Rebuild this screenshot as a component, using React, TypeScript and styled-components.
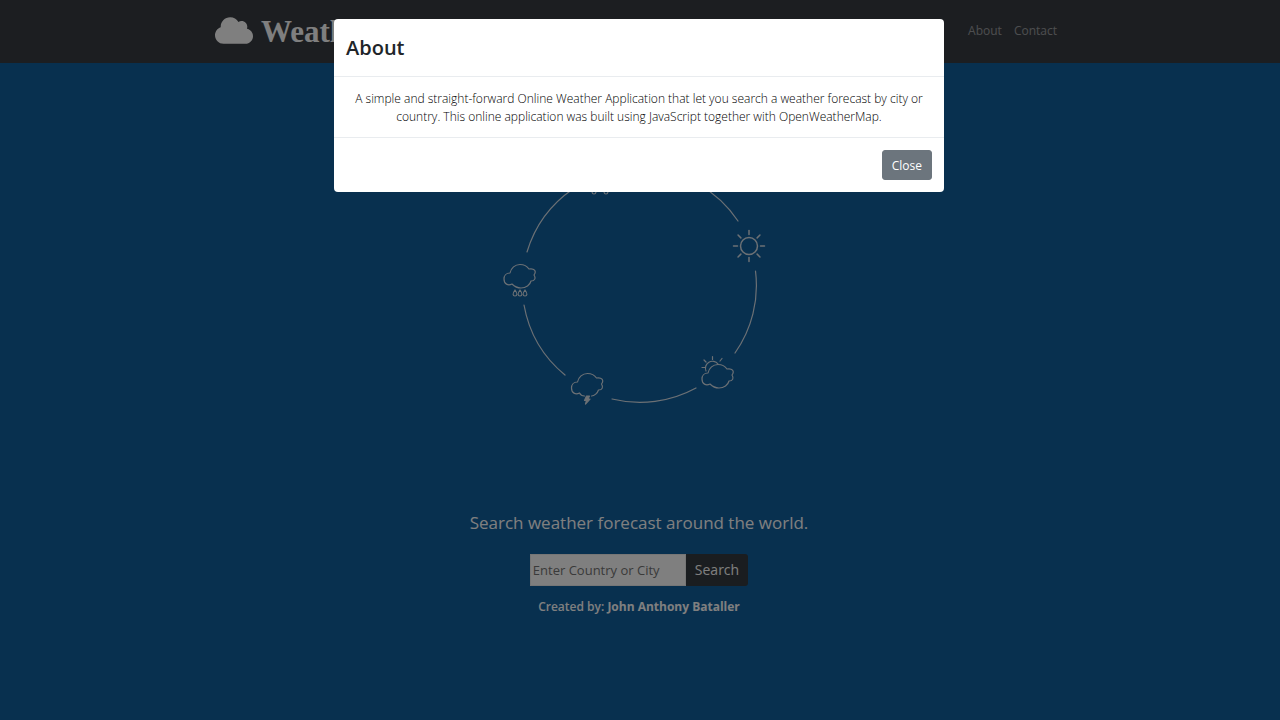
import React, { useState } from 'react';
import styled, { createGlobalStyle } from 'styled-components';
import { FaCloud } from 'react-icons/fa';

const GlobalStyle = createGlobalStyle`
  *, *::before, *::after { box-sizing: border-box; }
  html { background: #10609f; }
  body {
    margin: 0;
    padding-right: 2px;
    color: #212529;
    font-family: "Segoe UI", "Open Sans", "Noto Sans", sans-serif;
    font-size: 12px;
    line-height: 18px;
  }
`;

const Header = styled.header`
  margin-right: -2px;
  background: #383c42;
`;

const NavBar = styled.nav`
  display: flex;
  align-items: center;
  justify-content: space-between;
  max-width: 850px;
  min-height: 63px;
  margin: 0 auto;
`;

const Brand = styled.a`
  display: flex;
  align-items: center;
  gap: 8px;
  color: #fff;
  font: bold 31px/38px "Liberation Serif", "Times New Roman", serif;
  text-decoration: none;
`;

const CloudMark = styled(FaCloud)`
  width: 38px;
  height: 31px;
  margin-bottom: 2px;
`;

const NavLinks = styled.div`
  display: flex;
  padding: 0 2px 2px 0;
`;

const NavLink = styled.a`
  padding: 6px;
  color: rgba(255, 255, 255, 0.5);
  text-decoration: none;
`;

const Main = styled.main`
  display: flex;
  flex-direction: column;
  align-items: center;
  padding: 67px 12px 24px;
  color: #fff;
`;

const Cycle = styled.svg`
  width: 280px;
  height: 280px;
  margin-bottom: 98px;
  fill: none;
  stroke: #d8e1e9;
  stroke-width: 1.2;
  stroke-linecap: round;
  stroke-linejoin: round;
`;

const Tagline = styled.h1`
  margin: 0 0 16px;
  font-size: 17px;
  font-weight: 400;
  line-height: 30px;
`;

const SearchForm = styled.form`
  display: flex;
  margin-bottom: 12px;
`;

const SearchBox = styled.input`
  width: 156px;
  height: 32px;
  padding: 0 2px;
  border: 1px solid #ececec;
  border-radius: 0;
  background: #fff;
  font: inherit;
  font-size: 13px;
  &::placeholder { color: #757575; opacity: 1; }
`;

const SearchButton = styled.button`
  height: 32px;
  padding: 0 9px;
  border: 0;
  border-radius: 0 3px 3px 0;
  background: #343a40;
  color: #fff;
  font: inherit;
  font-size: 14px;
`;

const Credit = styled.p`
  margin: 0;
  font-weight: 600;
  strong { font-weight: 700; }
`;

const Backdrop = styled.div`
  position: fixed;
  inset: 0;
  display: flex;
  align-items: flex-start;
  justify-content: center;
  padding: 19px 14px 19px 12px;
  background: rgba(0, 0, 0, 0.5);
`;

const Dialog = styled.section`
  width: 100%;
  max-width: 610px;
  border-radius: 4px;
  background: #fff;
`;

const DialogHeader = styled.header`
  padding: 12px;
  border-bottom: 1px solid #e9ecef;
`;

const DialogTitle = styled.h2`
  margin: 0;
  font-size: 20px;
  font-weight: 600;
  line-height: 33px;
`;

const DialogBody = styled.p`
  margin: 0;
  padding: 13px 12px 11px;
  color: #000;
  font-weight: 300;
  text-align: center;
`;

const DialogFooter = styled.footer`
  display: flex;
  justify-content: flex-end;
  padding: 12px;
  border-top: 1px solid #e9ecef;
`;

const CloseButton = styled.button`
  height: 30px;
  padding: 1px 9px 0;
  border: 1px solid #6c757d;
  border-radius: 3px;
  background: #6c757d;
  color: #fff;
  font: inherit;
`;

const CLOUD =
  'M-10-3C-14-3-16 0-16 3C-16 8-12 10-8 8C-5 11-2 12 1 12C6 12 10 9 11 5C15 5 16 2 14-1C17-5 14-8 9-7C7-10 4-11.5 0-11.5C-5-11.5-9-8-10-3Z';
const DROP = 'M0-3C-3 1-2 3 0 3C2 3 3 1 0-3Z';

function Rain({ x, y, drops }: { x: number; y: number; drops: number[] }) {
  return (
    <g transform={`translate(${x} ${y})`}>
      <path d={CLOUD} />
      {drops.map((dx) => (
        <path key={dx} d={DROP} transform={`translate(${dx} 17)`} />
      ))}
    </g>
  );
}

function WeatherCycle() {
  return (
    <Cycle viewBox="499 130 280 280" aria-hidden="true">
      <path d="M527 252A117 117 0 0 1 573 189M698 184A117 117 0 0 1 738 221M755.500 271A117 117 0 0 1 735 353M696 388A117 117 0 0 1 612 399M565 375A117 117 0 0 1 524 305M626 170A117 117 0 0 1 650 169" />
      <Rain x={600} y={174} drops={[-6, 6]} />
      <Rain x={520} y={276} drops={[-5, 0, 5]} />
      <g transform="translate(749 246)" strokeWidth="1.5">
        <circle r="8.500" />
        {[0, 45, 90, 135, 180, 225, 270, 315].map((a) => (
          <path key={a} d="M0-11.500V-15.500" transform={`rotate(${a})`} />
        ))}
      </g>
      <g transform="translate(718 376)">
        <path d={CLOUD} />
        <path d="M-12-5A7 7 0 0 1 0-12M-5.500-16.500V-19.500M-12-14L-14-16M2-15L4-17.500M-13-8.500H-16" />
      </g>
      <g transform="translate(587.500 385)">
        <path d="M-3 11C-5 11-7 10-8 8C-12 10-16 8-16 3C-16 0-14-3-10-3C-9-8-5-11.500 0-11.500C4-11.500 7-10 9-7C14-8 17-5 14-1C16 2 15 5 11 5C10 8 7 11 4 11" />
        <path d="M-1 11H2L0.500 14H2.500L-2 19L-1 15.500H-3Z" fill="#d8e1e9" />
      </g>
    </Cycle>
  );
}

export default function App() {
  const [open, setOpen] = useState(true);
  const show = (e: React.MouseEvent) => {
    e.preventDefault();
    setOpen(true);
  };

  return (
    <>
      <GlobalStyle />
      <Header>
        <NavBar>
          <Brand href="#">
            <CloudMark aria-hidden="true" />
            Weather
          </Brand>
          <NavLinks>
            <NavLink href="#about" onClick={show}>About</NavLink>
            <NavLink href="#contact">Contact</NavLink>
          </NavLinks>
        </NavBar>
      </Header>
      <Main>
        <WeatherCycle />
        <Tagline>Search weather forecast around the world.</Tagline>
        <SearchForm onSubmit={(e) => e.preventDefault()}>
          <SearchBox type="text" aria-label="Country or city" placeholder="Enter Country or City" />
          <SearchButton type="submit">Search</SearchButton>
        </SearchForm>
        <Credit>
          Created by: <strong>John Anthony Bataller</strong>
        </Credit>
      </Main>
      {open && (
        <Backdrop>
          <Dialog role="dialog" aria-modal="true" aria-labelledby="about-title">
            <DialogHeader>
              <DialogTitle id="about-title">About</DialogTitle>
            </DialogHeader>
            <DialogBody>
              A simple and straight-forward Online Weather Application that let you search a weather
              forecast by city or country. This online application was built using JavaScript together
              with OpenWeatherMap.
            </DialogBody>
            <DialogFooter>
              <CloseButton type="button" onClick={() => setOpen(false)}>Close</CloseButton>
            </DialogFooter>
          </Dialog>
        </Backdrop>
      )}
    </>
  );
}
